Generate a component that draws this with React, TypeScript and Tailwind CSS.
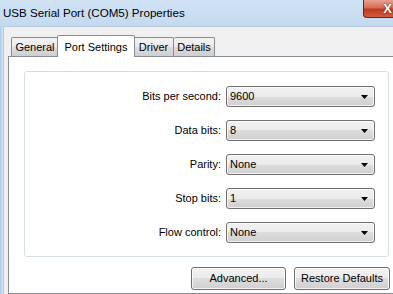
import React from "react";

const rows = [
  { label: "Bits per second:", value: "9600" },
  { label: "Data bits:", value: "8" },
  { label: "Parity:", value: "None" },
  { label: "Stop bits:", value: "1" },
  { label: "Flow control:", value: "None" },
];

const grad =
  "bg-[linear-gradient(to_bottom,#f2f2f2_0%,#ebebeb_50%,#dddddd_50%,#cfcfcf_100%)]";

function Combo({ value }: { value: string }) {
  return (
    <div
      className={`relative flex h-[21px] w-[149px] items-center rounded-[3px] border border-[#707070] ${grad} pl-[3px] shadow-[inset_0_0_0_1px_rgba(255,255,255,0.7)]`}
    >
      <span className="text-[11px] leading-none text-black">{value}</span>
      <svg className="absolute right-[6px] top-[8px]" width="7" height="4" viewBox="0 0 7 4">
        <path d="M0 0H7L3.5 4Z" fill="#000" />
      </svg>
    </div>
  );
}

function Tab({ label, w, noLeft }: { label: string; w: string; noLeft?: boolean }) {
  return (
    <div
      className={`flex h-[19px] ${w} items-center justify-center rounded-t-[2px] border border-b-0 border-[#898c95] ${grad} pt-[1px] text-[11px] text-black ${noLeft ? "border-l-0" : ""}`}
    >
      {label}
    </div>
  );
}

function ActiveTab({ label }: { label: string }) {
  return (
    <div className="relative z-10 -mx-[2px] mb-[-1px] flex h-[22px] w-[78px] items-start justify-center rounded-t-[2px] border border-b-0 border-[#898c95] bg-white pt-[3px] text-[11px] text-black">
      {label}
    </div>
  );
}

function Button({ children, w }: { children: React.ReactNode; w: string }) {
  return (
    <div
      className={`flex h-[23px] ${w} items-center justify-center rounded-[3px] border border-[#707070] ${grad} text-[11px] text-black shadow-[inset_0_0_0_1px_rgba(255,255,255,0.75)]`}
    >
      {children}
    </div>
  );
}

export default function App() {
  return (
    <div
      className="flex h-[294px] w-[393px] flex-col overflow-hidden bg-[#c9dcf0]"
      style={{ fontFamily: '"Liberation Sans", Arial, sans-serif' }}
    >
      {/* title bar */}
      <div className="flex h-[26px] shrink-0 items-start justify-between bg-[linear-gradient(to_bottom,#d1e2f4,#c4d9f0)]">
        <div className="pl-[3px] pt-[6px] text-[11.6px] leading-[14px] text-black">
          USB Serial Port (COM5) Properties
        </div>
        <div className="flex h-[18px] w-[30px] items-center justify-end rounded-bl-[4px] border border-t-0 border-r-0 border-[#6e2418] bg-[linear-gradient(to_bottom,#e9a293_0%,#d66c55_45%,#c03c1c_55%,#cf5d40_100%)] pr-[1px]">
          <span
            className="text-[13px] font-bold leading-none text-white"
            style={{ textShadow: "0 0 2px #4a140b" }}
          >
            X
          </span>
        </div>
      </div>

      {/* body */}
      <div className="flex flex-1">
        <div className="w-[3px] shrink-0 bg-[linear-gradient(to_right,#a9c8ea,#dbe8f6)]" />
        <div className="flex flex-1 flex-col border-t border-l border-[#b9c9dc] bg-[#f0f0f0] pl-[4px] pt-[9px]">
          {/* tabs */}
          <div className="flex h-[20px] items-end pl-[3px]">
            <Tab label="General" w="w-[48px]" />
            <ActiveTab label="Port Settings" />
            <Tab label="Driver" w="w-[41px]" />
            <Tab label="Details" w="w-[41px]" noLeft />
          </div>
          {/* panel */}
          <div className="w-[400px] flex-1 border border-[#898c95] bg-white pl-[15px] pt-[14px]">
            <div className="flex w-[365px] flex-col gap-[13px] rounded-[3px] border border-[#d5dfe5] pb-[13px] pl-[2px] pr-[13px] pt-[14px]">
              {rows.map((r) => (
                <div key={r.label} className="flex items-center justify-end gap-[5px]">
                  <span className="text-[11px] leading-none text-black">{r.label}</span>
                  <Combo value={r.value} />
                </div>
              ))}
            </div>
            <div className="mt-[10px] flex w-[366px] justify-end gap-[8px]">
              <Button w="w-[95px]">Advanced...</Button>
              <Button w="w-[96px]">Restore Defaults</Button>
            </div>
          </div>
        </div>
      </div>
    </div>
  );
}
